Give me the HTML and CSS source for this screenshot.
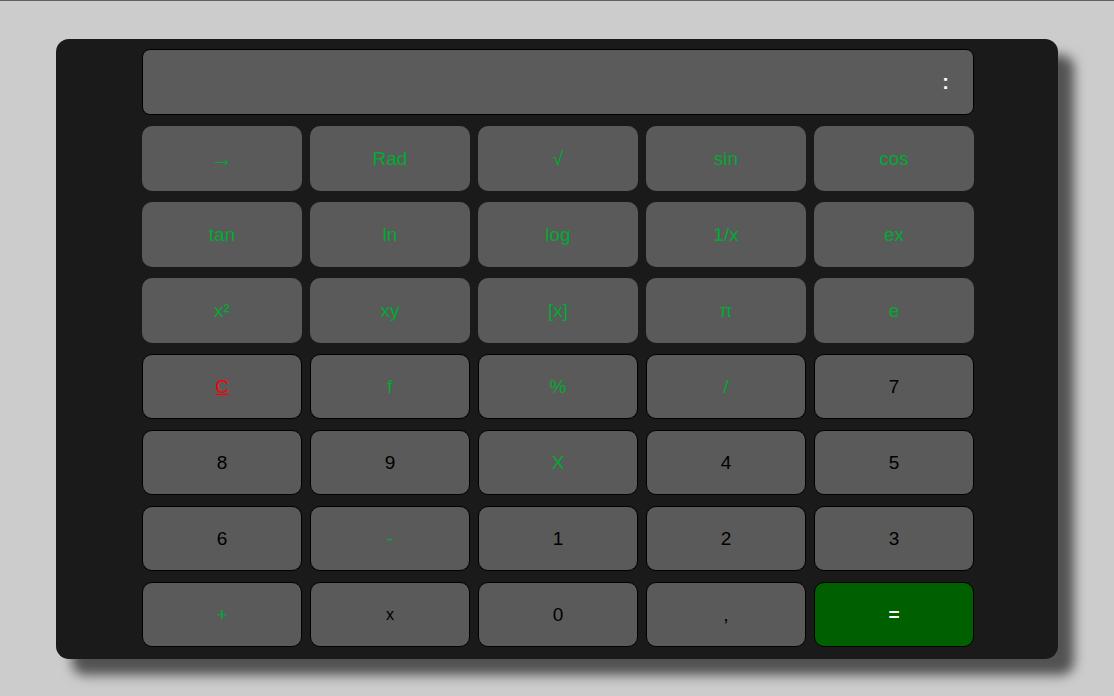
FILE: index.html
```html
<!DOCTYPE html>
<html>
<head>
<meta charset="utf-8">
<link rel="stylesheet" href="styles.css">
</head>
<body>
<div class="calc">
  <div class="display"><span class="readout">:</span></div>
  <div class="keys">
    <div class="key fn arrow">→</div>
    <div class="key fn">Rad</div>
    <div class="key fn">√</div>
    <div class="key fn">sin</div>
    <div class="key fn">cos</div>
    <div class="key fn">tan</div>
    <div class="key fn">ln</div>
    <div class="key fn">log</div>
    <div class="key fn">1/x</div>
    <div class="key fn">ex</div>
    <div class="key fn">x²</div>
    <div class="key fn">xy</div>
    <div class="key fn">[x]</div>
    <div class="key fn">π</div>
    <div class="key fn">e</div>
    <div class="key op clear"><u>C</u></div>
    <div class="key op">f</div>
    <div class="key op">%</div>
    <div class="key op">/</div>
    <div class="key num">7</div>
    <div class="key num">8</div>
    <div class="key num">9</div>
    <div class="key op">X</div>
    <div class="key num">4</div>
    <div class="key num">5</div>
    <div class="key num">6</div>
    <div class="key op">-</div>
    <div class="key num">1</div>
    <div class="key num">2</div>
    <div class="key num">3</div>
    <div class="key op">+</div>
    <div class="key num small">x</div>
    <div class="key num">0</div>
    <div class="key num">,</div>
    <div class="key equals">=</div>
  </div>
</div>
</body>
</html>
```
FILE: styles.css
```css
html {
  background: #cccccc;
}
body {
  margin: 0;
  padding-bottom: 40px;
  border-top: 1px solid #606060;
  font-family: "Liberation Sans", Arial, sans-serif;
  -webkit-font-smoothing: none;
}
.calc {
  width: 1002px;
  margin: 38px auto 0;
  box-sizing: border-box;
  padding: 10px 84px 12px 86px;
  background: #1a1a1a;
  border-radius: 13px;
  box-shadow: 16px 16px 12px rgba(0, 0, 0, 0.6);
  display: flex;
  flex-direction: column;
  gap: 11px;
}
.display {
  height: 66px;
  box-sizing: border-box;
  border: 1px solid #000;
  border-radius: 8px;
  background: #5b5b5b;
  display: flex;
  align-items: center;
  justify-content: flex-end;
  padding-right: 24px;
}
.readout {
  color: #fff;
  font-size: 20px;
  font-weight: bold;
}
.keys {
  display: grid;
  grid-template-columns: repeat(5, 160px);
  grid-auto-rows: 65px;
  column-gap: 8px;
  row-gap: 11px;
}
.key {
  box-sizing: border-box;
  background: #5a5a5a;
  border-radius: 10px;
  display: flex;
  align-items: center;
  justify-content: center;
  font-size: 19px;
  color: #0a3;
}
.fn {
  border: none;
}
.arrow {
  font-size: 22px;
}
.op, .num, .equals {
  border: 1px solid #000;
}
.num {
  color: #000;
}
.small {
  font-size: 16px;
}
.clear {
  color: #f00;
}
.equals {
  background: #006000;
  color: #fff;
  font-weight: bold;
}
```
